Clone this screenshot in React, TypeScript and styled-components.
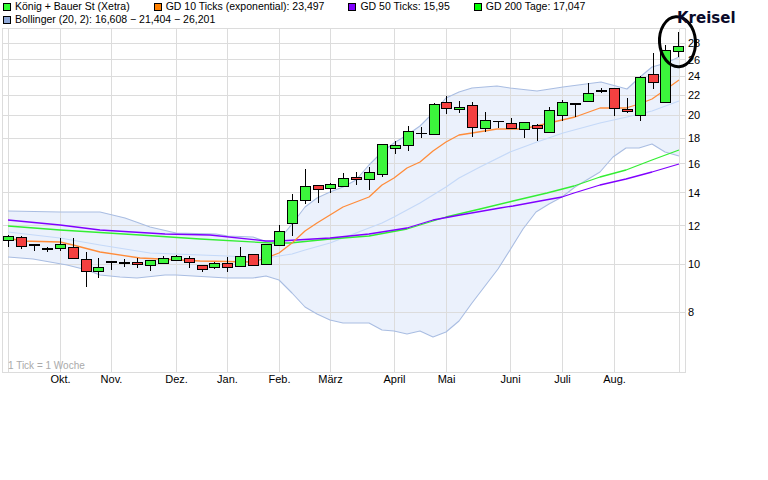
import styled, { createGlobalStyle } from "styled-components";

type Candle = [number, number, number, number, "g" | "r"];
type Pt = [number, number];

// top of body, bottom of body, wick top, wick bottom, colour (page pixels)
const candles: Candle[] = [
  [236, 240, 235, 247, "g"],
  [237, 246, 236, 249, "r"],
  [244, 245, 244, 251, "r"],
  [248, 249, 247, 252, "r"],
  [244, 248, 238, 251, "g"],
  [247, 258, 238, 259, "r"],
  [259, 271, 252, 287, "r"],
  [267, 271, 258, 278, "g"],
  [261, 262, 261, 270, "r"],
  [262, 263, 259, 267, "r"],
  [262, 264, 258, 268, "r"],
  [260, 265, 260, 271, "g"],
  [258, 263, 256, 263, "g"],
  [256, 260, 255, 260, "g"],
  [258, 262, 256, 268, "r"],
  [265, 269, 265, 272, "r"],
  [263, 267, 262, 269, "g"],
  [263, 267, 257, 272, "r"],
  [256, 266, 247, 266, "g"],
  [254, 265, 254, 265, "r"],
  [244, 264, 244, 264, "g"],
  [231, 245, 225, 245, "g"],
  [200, 223, 194, 236, "g"],
  [186, 200, 169, 204, "g"],
  [185, 189, 185, 203, "r"],
  [184, 188, 183, 193, "g"],
  [178, 186, 173, 186, "g"],
  [177, 179, 172, 185, "r"],
  [172, 179, 167, 190, "g"],
  [144, 174, 144, 177, "g"],
  [145, 148, 141, 154, "g"],
  [131, 145, 126, 151, "g"],
  [133, 133, 127, 138, "r"],
  [104, 134, 103, 134, "g"],
  [102, 108, 96, 114, "r"],
  [107, 109, 101, 113, "g"],
  [105, 127, 102, 137, "r"],
  [120, 128, 112, 132, "g"],
  [121, 121, 121, 128, "r"],
  [123, 128, 118, 129, "r"],
  [122, 129, 122, 138, "g"],
  [125, 128, 124, 141, "r"],
  [110, 132, 107, 132, "g"],
  [102, 115, 100, 121, "g"],
  [103, 104, 103, 117, "r"],
  [93, 101, 83, 102, "g"],
  [90, 91, 88, 93, "r"],
  [88, 108, 88, 116, "r"],
  [109, 111, 98, 113, "r"],
  [77, 115, 76, 121, "g"],
  [74, 82, 53, 89, "r"],
  [50, 102, 45, 102, "g"],
  [46, 51, 32, 57, "g"],
];

const upper: Pt[] = [
  [8, 211], [60, 212], [100, 212], [125, 218], [139, 223], [150, 227], [176, 233], [216, 234], [228, 236], [253, 237],
  [267, 242], [279, 240], [292, 224], [305, 207], [317, 198], [330, 192], [343, 187], [356, 180], [369, 165], [382, 152],
  [394, 143], [407, 135], [420, 126], [433, 113], [446, 98], [459, 92], [472, 88], [497, 86], [510, 88], [537, 91],
  [563, 87], [601, 82], [627, 89], [640, 77], [652, 67], [666, 63], [679, 57],
];

const lower: Pt[] = [
  [8, 257], [33, 259], [67, 265], [87, 270], [100, 275], [120, 277], [137, 278], [165, 275], [176, 275], [227, 278], [253, 278],
  [266, 276], [279, 280], [292, 293], [305, 307], [317, 314], [330, 320], [343, 323], [369, 323], [382, 330], [394, 331],
  [407, 334], [420, 331], [433, 337], [446, 332], [459, 321], [472, 303], [485, 286], [498, 269], [510, 250], [523, 229],
  [536, 212], [549, 204], [562, 197], [575, 187], [600, 172], [613, 157], [626, 148], [639, 148], [652, 144], [665, 152],
  [679, 156],
];

const middle: Pt[] = [
  [8, 232], [60, 238], [100, 245], [150, 253], [227, 256], [266, 258], [279, 256], [292, 254], [305, 250], [330, 243],
  [343, 238], [369, 228], [382, 223], [394, 217], [420, 203], [446, 187], [459, 178], [480, 167], [510, 152], [537, 142],
  [563, 133], [600, 123], [627, 117], [652, 111], [679, 101],
];

const ema10: Pt[] = [
  [8, 238], [22, 241], [60, 242], [73, 245], [100, 252], [140, 258], [200, 261], [253, 262], [266, 258], [279, 253],
  [292, 243], [305, 231], [317, 223], [330, 215], [343, 207], [369, 197], [382, 185], [394, 178], [407, 168], [420, 162],
  [433, 151], [446, 142], [459, 135], [472, 133], [497, 129], [523, 129], [549, 123], [575, 117], [600, 108], [626, 108],
  [639, 104], [652, 99], [665, 90], [679, 80],
];

const sma50: Pt[] = [
  [8, 220], [60, 225], [100, 230], [165, 234], [210, 235], [266, 241], [279, 241], [330, 238], [369, 234], [407, 228],
  [433, 220], [460, 215], [500, 208], [513, 206], [540, 201], [562, 197], [574, 193], [600, 185], [626, 179], [652, 172],
  [679, 164],
];

const sma200: Pt[] = [
  [8, 226], [60, 230], [140, 235], [200, 239], [270, 243], [290, 243], [330, 239], [369, 236], [407, 229], [446, 217],
  [480, 209], [513, 201], [547, 193], [574, 186], [600, 177], [626, 170], [652, 160], [679, 150],
];

const hLines = [28, 43, 59, 76, 95, 115, 138, 163, 192, 225, 264, 312, 372];
const vLines = [2, 8, 60, 111, 176, 227, 279, 330, 394, 446, 510, 562, 614, 679, 685];

const yLabels: [string, number][] = [
  ["28", 43], ["26", 60], ["24", 76], ["22", 95], ["20", 115], ["18", 138],
  ["16", 164], ["14", 193], ["12", 226], ["10", 264], ["8", 312],
];

const months: [string, number][] = [
  ["Okt.", 60], ["Nov.", 111], ["Dez.", 176], ["Jan.", 227], ["Feb.", 279], ["März", 330],
  ["April", 394], ["Mai", 446], ["Juni", 510], ["Juli", 562], ["Aug.", 614],
];

const legend = [
  [
    { label: "König + Bauer St (Xetra)", color: "#33ff33" },
    { label: "GD 10 Ticks (exponential): 23,497", color: "#ff8000" },
    { label: "GD 50 Ticks: 15,95", color: "#8000ff" },
    { label: "GD 200 Tage: 17,047", color: "#00ff00" },
  ],
  [{ label: "Bollinger (20, 2): 16,608 − 21,404 − 26,201", color: "#8fa8d8" }],
];

const toPoints = (pts: Pt[]) => pts.map(([x, y]) => `${x},${y}`).join(" ");

export default function App() {
  return (
    <Page>
      <GlobalStyle />
      <Legend>
        {legend.map((row) => (
          <LegendRow key={row[0].label}>
            {row.map((item) => (
              <LegendItem key={item.label}>
                <Swatch $color={item.color} />
                {item.label}
              </LegendItem>
            ))}
          </LegendRow>
        ))}
      </Legend>
      <Chart viewBox="0 26 768 454" width="768" height="454">
        <polygon points={toPoints([...upper, ...[...lower].reverse()])} fill="#ebf1fc" />
        {hLines.map((y) => (
          <GridLine key={y} x1={2} x2={685} y1={y + 0.5} y2={y + 0.5} />
        ))}
        {vLines.map((x) => (
          <GridLine key={x} x1={x + 0.5} x2={x + 0.5} y1={28} y2={373} />
        ))}
        <Curve points={toPoints(upper)} $color="#a9bde2" $width={1.1} />
        <Curve points={toPoints(lower)} $color="#a9bde2" $width={1.1} />
        <Curve points={toPoints(middle)} $color="#c5d9f8" $width={1.2} />
        <Curve points={toPoints(sma200)} $color="#33ee33" $width={1.3} />
        <Curve points={toPoints(sma50)} $color="#8000ff" $width={1.3} />
        <Curve points={toPoints(ema10)} $color="#ff8c3a" $width={1.3} />
        {candles.map(([top, bottom, wickTop, wickBottom, color], i) => {
          const x = Math.round(8.3 + 12.885 * i);
          return (
            <g key={i}>
              <Wick x1={x + 0.5} x2={x + 0.5} y1={wickTop} y2={wickBottom} />
              {top === bottom ? (
                <Wick x1={x - 5} x2={x + 6} y1={top + 0.5} y2={top + 0.5} />
              ) : (
                <Body x={x - 4.5} y={top + 0.5} width={10} height={bottom - top} $up={color === "g"} />
              )}
            </g>
          );
        })}
        {yLabels.map(([label, y]) => (
          <AxisText key={label} x={688} y={y + 4}>
            {label}
          </AxisText>
        ))}
        {months.map(([label, x]) => (
          <AxisText key={label} x={x + 0.5} y={383} textAnchor="middle">
            {label}
          </AxisText>
        ))}
        <Note x={8} y={369}>
          1 Tick = 1 Woche
        </Note>
        <Circled cx={677.5} cy={41.7} rx={18} ry={25} transform="rotate(-4 677.5 41.7)" />
        <Annotation x={677} y={23}>
          Kreisel
        </Annotation>
      </Chart>
    </Page>
  );
}

const GlobalStyle = createGlobalStyle`
  html, body {
    margin: 0;
    background: #fff;
  }
`;

const Page = styled.div`
  width: 768px;
  height: 480px;
  overflow: hidden;
  background: #fff;
  font-family: "Liberation Sans", Arial, sans-serif;
`;

const Legend = styled.div`
  height: 26px;
  padding-left: 3px;
  display: flex;
  flex-direction: column;
`;

const LegendRow = styled.div`
  display: flex;
  gap: 24px;
  height: 13px;
`;

const LegendItem = styled.div`
  display: flex;
  align-items: center;
  gap: 4px;
  font-size: 10.5px;
  line-height: 13px;
  color: #000;
  white-space: nowrap;
`;

const Swatch = styled.span<{ $color: string }>`
  width: 6px;
  height: 6px;
  border: 1px solid #000;
  background: ${(props) => props.$color};
`;

const Chart = styled.svg`
  display: block;
  overflow: visible;
`;

const GridLine = styled.line`
  stroke: #dcdcdc;
  stroke-width: 1;
  shape-rendering: crispEdges;
`;

const Curve = styled.polyline<{ $color: string; $width: number }>`
  fill: none;
  stroke: ${(props) => props.$color};
  stroke-width: ${(props) => props.$width};
  stroke-linejoin: round;
`;

const Wick = styled.line`
  stroke: #000;
  stroke-width: 1;
  shape-rendering: crispEdges;
`;

const Body = styled.rect<{ $up: boolean }>`
  fill: ${(props) => (props.$up ? "#3cf63c" : "#f44040")};
  stroke: #000;
  stroke-width: 1;
  shape-rendering: crispEdges;
`;

const AxisText = styled.text`
  font-family: "Liberation Sans", Arial, sans-serif;
  font-size: 11px;
  fill: #000;
`;

const Note = styled.text`
  font-family: "Liberation Sans", Arial, sans-serif;
  font-size: 10px;
  fill: #aaa;
`;

const Circled = styled.ellipse`
  fill: none;
  stroke: #000;
  stroke-width: 3;
`;

const Annotation = styled.text`
  font-family: "DejaVu Sans", Verdana, sans-serif;
  font-size: 15px;
  font-weight: 700;
  fill: #0a0a2a;
`;
